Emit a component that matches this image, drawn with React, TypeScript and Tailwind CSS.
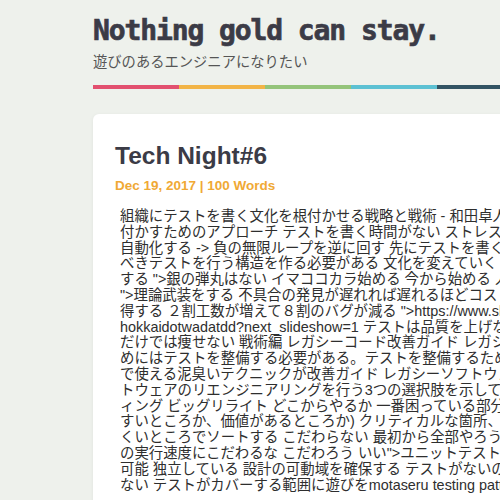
const lines = [
  "組織にテストを書く文化を根付かせる戦略と戦術 - 和田卓人",
  "付かすためのアプローチ テストを書く時間がない ストレスが",
  "自動化する -> 負の無限ループを逆に回す 先にテストを書く",
  "べきテストを行う構造を作る必要がある 文化を変えていく",
  "する \">銀の弾丸はない イマココカラ始める 今から始める 人",
  "\">理論武装をする 不具合の発見が遅れれば遅れるほどコスト",
  "得する ２割工数が増えて８割のバグが減る \">https://www.slideshare.net/",
  "hokkaidotwadatdd?next_slideshow=1 テストは品質を上げない",
  "だけでは痩せない 戦術編 レガシーコード改善ガイド レガシー",
  "めにはテストを整備する必要がある。テストを整備するため",
  "で使える泥臭いテクニックが改善ガイド レガシーソフトウェア",
  "トウェアのリエンジニアリングを行う3つの選択肢を示している",
  "ィング ビッグリライト どこからやるか 一番困っている部分",
  "すいところか、価値があるところか) クリティカルな箇所、",
  "くいところでソートする こだわらない 最初から全部やろうと",
  "の実行速度にこだわるな こだわろう いい\">ユニットテスト",
  "可能 独立している 設計の可動域を確保する テストがないの",
  "ない テストがカバーする範囲に遊びをmotaseru testing pattern",
];

const stripe = ["bg-[#e2506f]", "bg-[#f2b446]", "bg-[#94c47a]", "bg-[#5cc1d3]", "bg-[#325463]"];

export default function App() {
  return (
    <div className="min-h-screen w-full overflow-hidden bg-[#eef1ec]">
      <div className="ml-[93px] w-[430px] pt-[14px]">
        {/* site header */}
        <h1 className="whitespace-nowrap font-['DejaVu_Sans_Mono',monospace] text-[28px] font-bold leading-[33px] tracking-[-1.1px] text-[#3b3b46] [-webkit-text-stroke:0.7px_#3b3b46]">
          Nothing gold can stay.
        </h1>
        <p className="mt-[4px] whitespace-nowrap font-['Noto_Sans_CJK_JP',sans-serif] text-[14.3px] leading-[20px] text-[#555]">
          遊びのあるエンジニアになりたい
        </p>
        <div className="mt-[14px] flex h-[4px]">
          {stripe.map((c) => (
            <div key={c} className={`h-full w-[86px] ${c}`} />
          ))}
        </div>

        {/* post card */}
        <div className="mt-[25px] overflow-hidden rounded-md bg-white px-[22px] pt-[28px] pb-8 shadow-[0_1px_4px_rgba(0,0,0,0.06)]">
          <h2 className="font-['Liberation_Sans',sans-serif] text-[24.5px] font-bold leading-[28px] text-[#3b3b46]">
            Tech Night#6
          </h2>
          <div className="mt-[7px] font-['Liberation_Sans',sans-serif] text-[13.5px] font-bold leading-[18px] text-[#f0a935]">
            Dec 19, 2017 | 100 Words
          </div>
          <div className="mt-[14px] pl-[5px] font-['Liberation_Sans','Noto_Sans_CJK_JP',sans-serif] text-[14.4px] leading-[15.8px] text-[#2e2e2e]">
            {lines.map((l, i) => (
              <div key={i} className="whitespace-nowrap">
                {l}
              </div>
            ))}
          </div>
        </div>
      </div>
    </div>
  );
}
